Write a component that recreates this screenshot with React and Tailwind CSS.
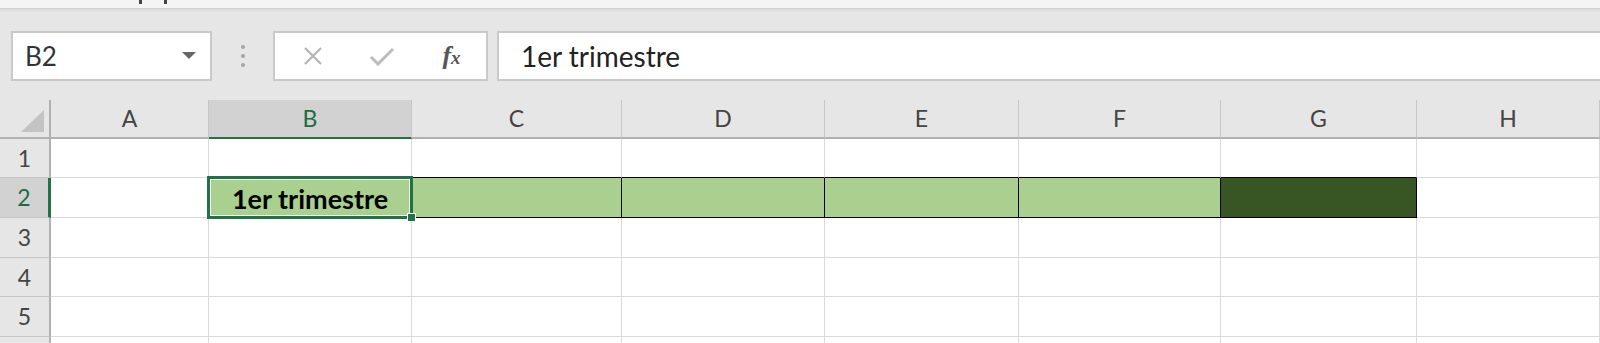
import React from 'react';

const COLS = ['A', 'B', 'C', 'D', 'E', 'F', 'G', 'H'];
const ROWS = [1, 2, 3, 4, 5, 6];

const cellFont = { fontFamily: 'Lato, "Open Sans", sans-serif' };

// classes for a body cell; row 2 holds the coloured band
const cellClass = (row, col) => {
  let cls = 'relative border-r border-b border-[#dadada]';
  if (row === 1 && ['C', 'D', 'E', 'F', 'G'].includes(col)) {
    cls = 'relative border-r border-[#dadada] border-b border-b-black';
  }
  if (row === 2) {
    if (col === 'B') cls = 'relative z-10 bg-[#a9d08e] border-r border-b border-black';
    if (['C', 'D', 'E', 'F'].includes(col)) cls = 'relative bg-[#a9d08e] border-r border-b border-black';
    if (col === 'G') cls = 'relative bg-[#375623] border-r border-b border-black';
  }
  return cls;
};

const FormulaBar = () => (
  <div className="bg-[#e6e6e6]">
    <div className="relative h-[9px] bg-[#f4f4f4] border-b border-[#d2d2d2]">
      <div className="absolute left-[139px] top-0 h-[4px] w-[3px] bg-[#444]" />
      <div className="absolute left-[164px] top-0 h-[4px] w-[3px] bg-[#444]" />
    </div>
    <div className="h-[3px] bg-gradient-to-b from-[#d9d9d9] to-[#e6e6e6]" />
    <div className="flex items-stretch h-[50px] mt-[19px] pl-[11px]" style={cellFont}>
      <div className="w-[201px] bg-white border-2 border-[#c9c9c9] flex items-center justify-between pl-[12px] pr-[14px]">
        <span className="text-[26px] text-[#333] leading-none">B2</span>
        <svg width="14" height="8" viewBox="0 0 14 8">
          <polygon points="0,0 14,0 7,7" fill="#666" />
        </svg>
      </div>
      <div className="w-[61px] flex flex-col items-center justify-center gap-[5px]">
        <div className="w-[4px] h-[4px] rounded-full bg-[#a5a5a5]" />
        <div className="w-[4px] h-[4px] rounded-full bg-[#a5a5a5]" />
        <div className="w-[4px] h-[4px] rounded-full bg-[#a5a5a5]" />
      </div>
      <div className="w-[215px] bg-white border-2 border-[#c9c9c9] flex items-center">
        <div className="w-[72px] flex justify-center pl-[4px]">
          <svg width="20" height="20" viewBox="0 0 20 20">
            <path d="M2 2 L18 18 M18 2 L2 18" stroke="#b4b4b4" strokeWidth="2.2" />
          </svg>
        </div>
        <div className="w-[72px] flex justify-center">
          <svg width="26" height="20" viewBox="0 0 26 20">
            <path d="M2 11 L9 18 L24 3" stroke="#bcbcbc" strokeWidth="3" fill="none" />
          </svg>
        </div>
        <div className="w-[70px] flex justify-center">
          <span className="text-[26px] italic font-bold text-[#555] leading-none" style={{ fontFamily: '"Liberation Serif", serif' }}>
            f<span className="text-[19px]">x</span>
          </span>
        </div>
      </div>
      <div className="flex-1 ml-[9px] bg-white border-2 border-r-0 border-[#c9c9c9] flex items-center pl-[22px]">
        <span className="text-[28px] text-[#222] leading-none">1er trimestre</span>
      </div>
    </div>
    <div className="h-[19px]" />
  </div>
);

const Sheet = () => (
  <div
    className="grid grid-cols-[51px_158px_203px_210px_203px_194px_202px_196px_1fr] grid-rows-[39px_39px_40px_40px_39px_40px_40px] bg-white"
    style={cellFont}
  >
    <div className="relative bg-[#e6e6e6] border-r-2 border-b-2 border-[#b1b1b1]">
      <svg className="absolute left-[21px] top-[10px]" width="23" height="22" viewBox="0 0 23 22">
        <polygon points="23,0 23,22 0,22" fill="#c3c3c3" />
      </svg>
    </div>
    {COLS.map((c) =>
      c === 'B' ? (
        <div
          key={c}
          className="bg-[#d2d2d2] border-r border-[#c6c6c6] border-b-2 border-b-[#217346] flex items-center justify-center text-[23px] text-[#1e6b45]"
        >
          {c}
        </div>
      ) : (
        <div
          key={c}
          className="bg-[#e6e6e6] border-r border-[#c6c6c6] border-b-2 border-b-[#b1b1b1] flex items-center justify-center text-[23px] text-[#444]"
        >
          {c}
        </div>
      )
    )}
    {ROWS.map((r) => (
      <React.Fragment key={r}>
        {r === 2 ? (
          <div className="bg-[#d2d2d2] border-r-[3px] border-[#217346] border-b border-b-[#c6c6c6] flex items-center justify-center text-[23px] text-[#1e6b45]">
            {r}
          </div>
        ) : (
          <div className="bg-[#e6e6e6] border-r-2 border-[#b1b1b1] border-b border-b-[#c6c6c6] flex items-center justify-center text-[23px] text-[#444]">
            {r < 6 ? r : ''}
          </div>
        )}
        {COLS.map((c) => (
          <div key={c} className={cellClass(r, c)}>
            {r === 2 && c === 'B' && (
              <>
                <div className="absolute inset-0 flex items-end justify-center pb-[5px]">
                  <span className="text-[27px] font-bold text-black leading-none">1er trimestre</span>
                </div>
                <div className="absolute -left-[2px] -top-[2px] -right-[2px] -bottom-[2px] border-[3px] border-[#217346]">
                  <div className="absolute inset-0 border border-white" />
                </div>
                <div className="absolute -right-[5px] -bottom-[5px] w-[9px] h-[9px] bg-[#217346] border border-white" />
              </>
            )}
          </div>
        ))}
      </React.Fragment>
    ))}
  </div>
);

export default function App() {
  return (
    <div className="w-[1600px] h-[343px] overflow-hidden bg-[#e6e6e6]">
      <FormulaBar />
      <Sheet />
    </div>
  );
}
